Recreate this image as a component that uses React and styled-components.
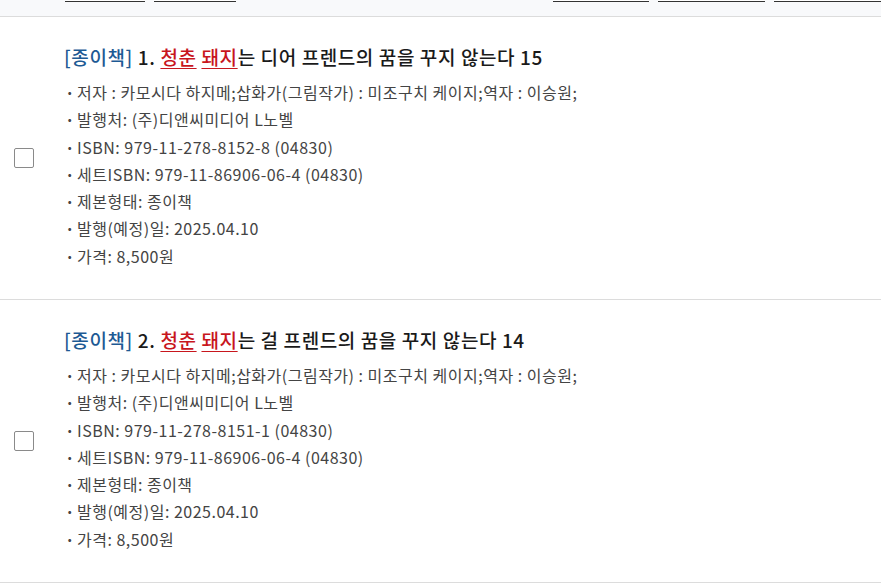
import React from 'react';
import styled, { createGlobalStyle } from 'styled-components';

const GlobalStyle = createGlobalStyle`
  html, body {
    margin: 0;
    padding: 0;
    background: #fff;
  }
  body {
    font-family: "Noto Sans CJK KR", "Noto Sans", sans-serif;
    color: #222;
  }
`;

const Toolbar = styled.div`
  display: flex;
  align-items: flex-start;
  height: 16px;
  background: #f8f9fb;
  border-bottom: 1px solid #dcdcdc;
  overflow: hidden;
  padding-left: 65px;
`;

const ToolGroup = styled.div`
  display: flex;
  gap: 9px;
  margin-left: ${p => p.$offset || 0}px;
`;

const ToolButton = styled.div`
  width: ${p => p.$w}px;
  height: 30px;
  margin-top: -29px;
  background: #fff;
  border-bottom: 1px solid #333;
  flex-shrink: 0;
`;

const List = styled.ul`
  list-style: none;
  margin: 0;
  padding: 0;
`;

const Item = styled.li`
  display: flex;
  align-items: center;
  height: 282px;
  border-bottom: 1px solid #dcdcdc;
`;

const Check = styled.input.attrs({ type: 'checkbox' })`
  appearance: none;
  width: 20px;
  height: 20px;
  margin: 0 30px 0 14px;
  border: 1px solid #8a8a8a;
  border-radius: 2px;
  background: #fff;
  flex-shrink: 0;
`;

const Body = styled.div`
  display: flex;
  flex-direction: column;
  margin-top: -2px;
`;

const Title = styled.h3`
  margin: 0 0 9px;
  font-size: 19px;
  line-height: 26px;
  font-weight: 500;
  color: #1a1a1a;
  letter-spacing: 0.6px;
`;

const Kind = styled.span`
  color: #1d5a94;
`;

const Hit = styled.span`
  color: #c8161d;
  text-decoration: underline;
  text-underline-offset: 3px;
`;

const Info = styled.ul`
  list-style: none;
  margin: 0;
  padding: 0;
`;

const InfoRow = styled.li`
  font-size: 16px;
  line-height: 27.2px;
  color: #444;
  letter-spacing: 0.5px;
  &::before {
    content: '·';
    display: inline-block;
    width: 12px;
    margin-left: 1px;
    font-weight: 700;
  }
`;

const books = [
  {
    no: 1,
    rest: '는 디어 프렌드의 꿈을 꾸지 않는다 15',
    isbn: '979-11-278-8152-8 (04830)',
  },
  {
    no: 2,
    rest: '는 걸 프렌드의 꿈을 꾸지 않는다 14',
    isbn: '979-11-278-8151-1 (04830)',
  },
];

export default function App() {
  return (
    <>
      <GlobalStyle />
      <Toolbar>
        <ToolGroup>
          <ToolButton $w={80} />
          <ToolButton $w={82} />
        </ToolGroup>
        <ToolGroup $offset={317}>
          <ToolButton $w={96} />
          <ToolButton $w={107} />
          <ToolButton $w={120} />
        </ToolGroup>
      </Toolbar>
      <List>
        {books.map(b => (
          <Item key={b.no}>
            <Check />
            <Body>
              <Title>
                <Kind>[종이책]</Kind> {b.no}. <Hit>청춘</Hit> <Hit>돼지</Hit>{b.rest}
              </Title>
              <Info>
                <InfoRow>저자 : 카모시다 하지메;삽화가(그림작가) : 미조구치 케이지;역자 : 이승원;</InfoRow>
                <InfoRow>발행처: (주)디앤씨미디어 L노벨</InfoRow>
                <InfoRow>ISBN: {b.isbn}</InfoRow>
                <InfoRow>세트ISBN: 979-11-86906-06-4 (04830)</InfoRow>
                <InfoRow>제본형태: 종이책</InfoRow>
                <InfoRow>발행(예정)일: 2025.04.10</InfoRow>
                <InfoRow>가격: 8,500원</InfoRow>
              </Info>
            </Body>
          </Item>
        ))}
      </List>
    </>
  );
}
